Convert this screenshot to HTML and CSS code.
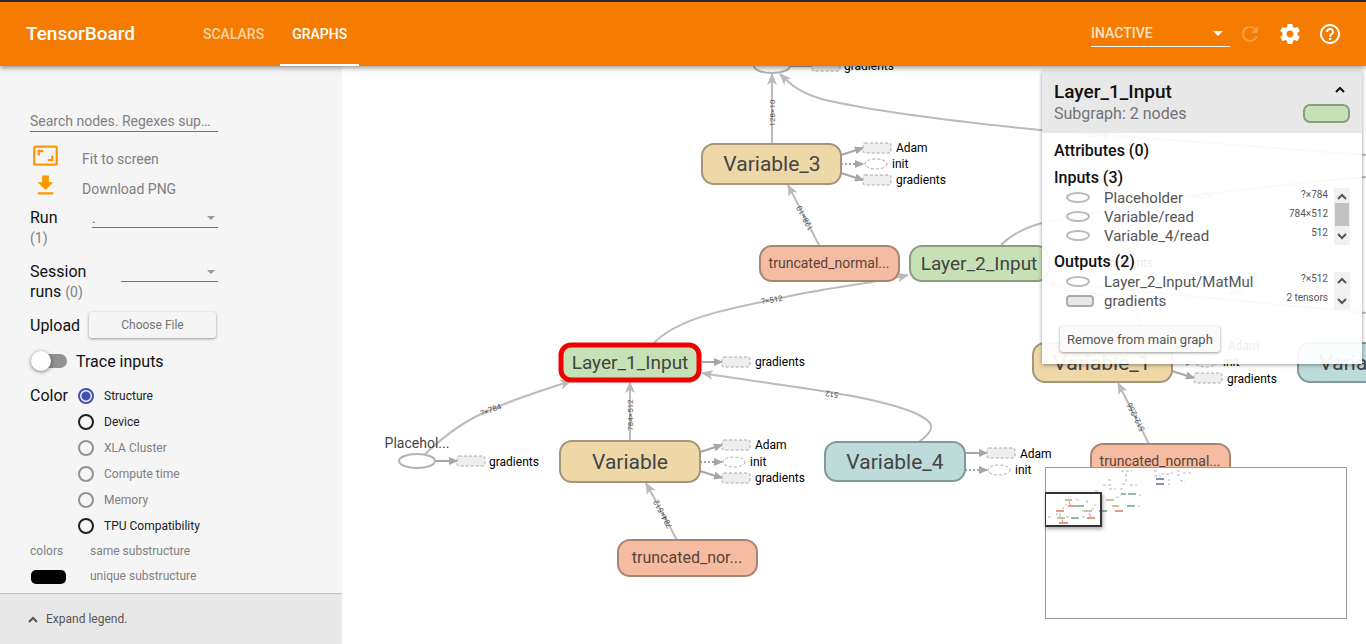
FILE: index.html
```html
<!DOCTYPE html>
<html lang="en">
<head>
<meta charset="utf-8">
<title>TensorBoard</title>
<link rel="stylesheet" href="styles.css">
</head>
<body>
<header class="toolbar">
  <h1 class="brand">TensorBoard</h1>
  <nav class="tabs">
    <a class="tab" href="#scalars">SCALARS</a>
    <a class="tab tab-active" href="#graphs">GRAPHS</a>
  </nav>
  <div class="tools">
    <div class="drop drop-light">
      <select aria-label="Inactive dashboards"><option>INACTIVE</option></select>
      <svg class="caret" viewBox="0 0 10 5"><path d="M0 0h10L5 5z"/></svg>
    </div>
    <button class="icon-btn" aria-label="Reload" disabled><svg viewBox="0 0 24 24"><path d="M17.65 6.35C16.2 4.9 14.21 4 12 4c-4.42 0-7.99 3.58-7.99 8s3.57 8 7.99 8c3.73 0 6.84-2.55 7.73-6h-2.08c-.82 2.33-3.04 4-5.65 4-3.31 0-6-2.69-6-6s2.69-6 6-6c1.66 0 3.14.69 4.22 1.78L13 11h7V4l-2.35 2.35z"/></svg></button>
    <button class="icon-btn" aria-label="Settings"><svg viewBox="0 0 24 24"><path d="M19.43 12.98c.04-.32.07-.64.07-.98s-.03-.66-.07-.98l2.11-1.65c.19-.15.24-.42.12-.64l-2-3.46c-.12-.22-.39-.3-.61-.22l-2.49 1c-.52-.4-1.08-.73-1.69-.98l-.38-2.65C14.46 2.18 14.25 2 14 2h-4c-.25 0-.46.18-.49.42l-.38 2.65c-.61.25-1.17.59-1.69.98l-2.49-1c-.23-.09-.49 0-.61.22l-2 3.46c-.13.22-.07.49.12.64l2.11 1.65c-.04.32-.07.65-.07.98s.03.66.07.98l-2.11 1.65c-.19.15-.24.42-.12.64l2 3.46c.12.22.39.3.61.22l2.49-1c.52.4 1.08.73 1.69.98l.38 2.65c.03.24.24.42.49.42h4c.25 0 .46-.18.49-.42l.38-2.65c.61-.25 1.17-.59 1.69-.98l2.49 1c.23.09.49 0 .61-.22l2-3.46c.12-.22.07-.49-.12-.64l-2.11-1.65zM12 15.5c-1.93 0-3.5-1.57-3.5-3.5s1.57-3.5 3.5-3.5 3.5 1.57 3.5 3.5-1.57 3.5-3.5 3.5z"/></svg></button>
    <button class="icon-btn" aria-label="Help"><svg viewBox="0 0 24 24"><path d="M11 18h2v-2h-2v2zm1-16C6.48 2 2 6.48 2 12s4.480 10 10 10 10-4.480 10-10S17.520 2 12 2zm0 18c-4.410 0-8-3.590-8-8s3.590-8 8-8 8 3.590 8 8-3.590 8-8 8zm0-14c-2.210 0-4 1.790-4 4h2c0-1.100.900-2 2-2s2 .900 2 2c0 2-3 1.750-3 5h2c0-2.250 3-2.500 3-5 0-2.210-1.790-4-4-4z"/></svg></button>
  </div>
</header>

<div class="workspace">
  <aside class="side">
    <div class="controls">
      <input class="search" type="text" aria-label="Search nodes" placeholder="Search nodes. Regexes supported.">
      <div class="actions">
        <button class="action"><svg viewBox="0 0 24 24"><path d="M19 12h-2v3h-3v2h5v-5zM7 9h3V7H5v5h2V9zm14-6H3c-1.100 0-2 .900-2 2v14c0 1.100.900 2 2 2h18c1.100 0 2-.900 2-2V5c0-1.100-.900-2-2-2zm0 16H3V5h18v14z"/></svg><span>Fit to screen</span></button>
        <button class="action"><svg viewBox="0 0 24 24"><path d="M19 9h-4V3H9v6H5l7 7 7-7zM5 18v2h14v-2H5z"/></svg><span>Download PNG</span></button>
      </div>
      <div class="field">
        <label class="label-short" for="run">Run <small>(1)</small></label>
        <div class="drop drop-wide"><select id="run"><option>.</option></select><svg class="caret" viewBox="0 0 10 5"><path d="M0 0h10L5 5z"/></svg></div>
      </div>
      <div class="field field-session">
        <label for="session">Session runs <small>(0)</small></label>
        <div class="drop drop-narrow"><select id="session"><option></option></select><svg class="caret" viewBox="0 0 10 5"><path d="M0 0h10L5 5z"/></svg></div>
      </div>
      <div class="upload"><span>Upload</span><button class="raised file">Choose File</button></div>
      <label class="trace"><input class="toggle" type="checkbox">Trace inputs</label>
      <fieldset class="color">
        <legend>Color</legend>
        <div class="radios">
          <label><input type="radio" name="color" checked>Structure</label>
          <label><input type="radio" name="color">Device</label>
          <label><input type="radio" name="color" disabled>XLA Cluster</label>
          <label><input type="radio" name="color" disabled>Compute time</label>
          <label><input type="radio" name="color" disabled>Memory</label>
          <label><input type="radio" name="color">TPU Compatibility</label>
        </div>
      </fieldset>
      <dl class="keys">
        <dt>colors</dt><dd>same substructure</dd>
        <dt><span class="swatch"></span></dt><dd>unique substructure</dd>
      </dl>
    </div>
    <button class="legend"><svg viewBox="0 0 10 7"><path d="M1 6l4-4 4 4"/></svg>Expand legend.</button>
  </aside>

  <main class="stage">
    <svg class="graph" role="img" aria-label="Main graph">
      <defs>
        <marker id="head" markerUnits="userSpaceOnUse" markerWidth="12" markerHeight="12" refX="11" refY="6" orient="auto"><path d="M0 1L12 6L0 11L3 6z" fill="#bbb"/></marker>
        <marker id="tip" markerUnits="userSpaceOnUse" markerWidth="9" markerHeight="8" refX="8" refY="4" orient="auto"><path d="M0 0L9 4L0 8z" fill="#a6a6a6"/></marker>
      </defs>
      <g transform="translate(-342 -66)">
        <g class="edges">
          <path d="M772 144V74"/>
          <path d="M1366 155C1280 149 1160 139 1040 130C960 122 880 112 830 101C802 95 791 85 780 74"/>
          <path d="M819 245L788 185"/>
          <path class="plain" d="M1001 245C1012 234 1024 228 1042 223C1150 200 1250 187 1366 177"/>
          <path d="M653 344C680 315 740 307 790 296C835 286 870 284 908 275"/>
          <path d="M1366 313L1046 282"/>
          <path d="M1142 342C1144 290 1100 300 1047 283"/>
          <path d="M425 454C445 436 455 428 475 417C505 402 540 391 571 381"/>
          <path d="M630 440V382"/>
          <path d="M919 442C936 429 936 423 915 413C865 393 780 386 702 373"/>
          <path d="M677 540L646 483"/>
          <path d="M1149 444L1118 383"/>
        </g>
        <g class="shapes">
          <text transform="translate(772 113) rotate(-90)">128×10</text>
          <text transform="translate(805 218) rotate(-118)">128×10</text>
          <text transform="translate(772 300) rotate(-9)">?×512</text>
          <text transform="translate(491 410) rotate(-20)">?×784</text>
          <text transform="translate(630 415) rotate(-90)">784×512</text>
          <text transform="translate(832 394) rotate(189)">512</text>
          <text transform="translate(663 514) rotate(-118)">784×512</text>
          <text transform="translate(1136 417) rotate(-117)">512×256</text>
          <text transform="translate(1095 135) rotate(5)">128×10</text>
          <text transform="translate(1203 196) rotate(-8)">?×256</text>
          <text transform="translate(1235 292) rotate(6)">256</text>
        </g>
        <g class="links">
          <path d="M790 66H812M841 155L863 148"/><path d="M841 173L863 180"/>
          <path d="M702 362H722"/><path d="M435 461H457"/>
          <path d="M700 452L722 445"/><path d="M700 471L722 478"/>
          <path d="M965 453H987"/><path d="M1172 371L1194 378"/><path d="M1172 352L1194 345"/>
          <path class="dash" d="M841 164H863"/><path class="dash" d="M700 462H722"/>
          <path class="dash" d="M965 470H987"/><path class="dash" d="M1172 362H1194"/>
        </g>
        <g class="stubs">
          <rect x="812" y="61" width="28" height="10" rx="2"/><rect x="863" y="143" width="28" height="10" rx="2"/><rect x="863" y="175" width="28" height="10" rx="2"/>
          <rect x="722" y="357" width="28" height="10" rx="2"/><rect x="457" y="456" width="28" height="10" rx="2"/>
          <rect x="722" y="440" width="28" height="10" rx="2"/><rect x="722" y="473" width="28" height="10" rx="2"/>
          <rect x="987" y="448" width="28" height="10" rx="2"/><rect x="1194" y="373" width="28" height="10" rx="2"/><rect x="1194" y="340" width="28" height="10" rx="2"/>
          <ellipse cx="876" cy="164" rx="11" ry="5"/><ellipse cx="734" cy="462" rx="11" ry="5"/><ellipse cx="999" cy="470" rx="11" ry="5"/><ellipse cx="1206" cy="362" rx="11" ry="5"/>
        </g>
        <g class="notes">
          <text x="844" y="70">gradients</text>
          <text x="896" y="152">Adam</text><text x="892" y="168">init</text><text x="896" y="184">gradients</text>
          <text x="755" y="366">gradients</text><text x="489" y="466">gradients</text>
          <text x="755" y="449">Adam</text><text x="750" y="466">init</text><text x="755" y="482">gradients</text>
          <text x="1020" y="458">Adam</text><text x="1015" y="474">init</text>
          <text x="1228" y="350">Adam</text><text x="1223" y="366">init</text><text x="1227" y="383">gradients</text>
          <text x="1103" y="267">gradients</text>
        </g>
        <g class="ops"><ellipse cx="772" cy="66" rx="18" ry="7"/><ellipse cx="417" cy="461" rx="18" ry="7"/><text x="417" y="448">Placehol...</text></g>
        <g class="nodes sand">
          <rect x="702" y="144" width="139" height="40" rx="12"/><text x="772" y="171">Variable_3</text>
          <rect x="560" y="441" width="140" height="41" rx="12"/><text x="630" y="469">Variable</text>
          <rect x="1033" y="343" width="139" height="39" rx="12"/><text x="1102" y="370">Variable_1</text>
        </g>
        <g class="nodes teal">
          <rect x="825" y="442" width="140" height="39" rx="12"/><text x="895" y="469">Variable_4</text>
          <rect x="1298" y="343" width="140" height="39" rx="12"/><text x="1368" y="370">Variable_5</text>
        </g>
        <g class="nodes green">
          <rect x="910" y="246" width="139" height="35" rx="12"/><text x="979" y="270">Layer_2_Input</text>
          <rect class="selected" x="561" y="345" width="138" height="35" rx="10"/><text x="630" y="369">Layer_1_Input</text>
        </g>
        <g class="nodes coral">
          <rect x="760" y="246" width="139" height="35" rx="12"/><text x="829" y="268">truncated_normal...</text>
          <rect x="618" y="540" width="139" height="36" rx="12"/><text class="roomy" x="687" y="563">truncated_nor...</text>
          <rect x="1091" y="444" width="139" height="36" rx="12"/><text x="1160" y="466">truncated_normal...</text>
        </g>
      </g>
    </svg>

    <section class="info">
      <header class="info-head">
        <div><h2>Layer_1_Input</h2><p>Subgraph: 2 nodes</p></div>
        <div class="info-side">
          <button class="fold" aria-label="Collapse"><svg viewBox="0 0 10 7"><path d="M1 6l4-4 4 4"/></svg></button>
          <span class="node-chip"></span>
        </div>
      </header>
      <div class="info-body">
        <h3>Attributes (0)</h3>
        <h3>Inputs (3)</h3>
        <div class="list">
          <ul>
            <li><i class="op"></i><span>Placeholder</span><b>?×784</b></li>
            <li><i class="op"></i><span>Variable/read</span><b>784×512</b></li>
            <li><i class="op"></i><span>Variable_4/read</span><b>512</b></li>
          </ul>
          <div class="bar"><svg viewBox="0 0 10 7"><path d="M1 6l4-4 4 4"/></svg><span class="thumb"></span><svg viewBox="0 0 10 7"><path d="M1 1l4 4 4-4"/></svg></div>
        </div>
        <h3>Outputs (2)</h3>
        <div class="list">
          <ul>
            <li><i class="op"></i><span>Layer_2_Input/MatMul</span><b>?×512</b></li>
            <li><i class="op group"></i><span>gradients</span><b>2 tensors</b></li>
          </ul>
          <div class="bar"><svg viewBox="0 0 10 7"><path d="M1 6l4-4 4 4"/></svg><svg viewBox="0 0 10 7"><path d="M1 1l4 4 4-4"/></svg></div>
        </div>
        <button class="raised remove">Remove from main graph</button>
      </div>
    </section>

    <div class="minimap">
      <svg viewBox="0 0 300 150" role="img" aria-label="Minimap">
        <g fill="none" stroke-width="1" opacity=".6">
          <path stroke="#888" stroke-dasharray="3 2" d="M75 3h11M80 6v9M62 12h5M57 17h8M84 17h7M76 16h5M63 21h7M74 21h5M49 23h3M70 30l5-3M30 31l4 2M41 32v5M48 37h2M93 27h2M92 38h2M108 3h4M108 8h7M115 6h8M125 5h2M131 3h5M131 7h4M137 5h8M134 12l5 2M122 12h2M122 16h2M10 47l4-4M16 41l5-5M2 49h5M20 49h3M36 49h3M36 43h3M45 41h3"/>
          <path stroke="#35457a" stroke-width="2" d="M110 11h8M110 16h8"/>
          <path stroke="#a89a5c" stroke-width="2" d="M19 32h7M38 43h8M66 38h7M11 50h8M60 32h8"/>
          <path stroke="#d8573a" stroke-width="2" d="M22 38h8M10 43h8M41 50h8M13 55h9M69 43h8"/>
          <path stroke="#4d8c78" stroke-width="2" d="M30 38h8M25 50h8M53 43h8M81 38h8M82 26h8M75 26h5"/>
          <path stroke="#d8573a" d="M23 33l1 4M14 45v4M16 51l1 4M43 45l2 4"/>
        </g>
      </svg>
      <div class="lens"></div>
    </div>
  </main>
</div>
</body>
</html>
```

FILE: styles.css
```css
* { box-sizing: border-box; }
body {
  margin: 0;
  height: 100vh;
  display: flex;
  flex-direction: column;
  overflow: hidden;
  font-family: Roboto, "Liberation Sans", sans-serif;
  color: #111;
  background: #fff;
}
h1, h2, h3, p, ul, dl, dd, fieldset { margin: 0; padding: 0; border: 0; }
ul { list-style: none; }
button, input, select { font: inherit; color: inherit; margin: 0; }
button { border: 0; background: none; padding: 0; cursor: pointer; }
svg { display: block; }

.toolbar {
  display: flex;
  align-items: stretch;
  height: 66px;
  flex: none;
  padding: 0 16px 0 26px;
  border-top: 2px solid #2c2730;
  background: #f57c00;
  color: #fff;
  box-shadow: 0 2px 5px rgba(0, 0, 0, .4);
  position: relative;
  z-index: 2;
}
.brand { font-size: 19px; font-weight: 500; line-height: 64px; width: 165px; }
.tabs { display: flex; gap: 4px; }
.tab {
  padding: 0 12px;
  font-size: 14px;
  font-weight: 500;
  line-height: 64px;
  color: #ffd5a8;
  text-decoration: none;
}
.tab-active { color: #fff; box-shadow: inset 0 -2px #fff; }
.tools { display: flex; align-items: center; margin-left: auto; }

.drop { position: relative; height: 20px; border-bottom: 1px solid #737373; }
.drop select {
  appearance: none;
  width: 100%;
  height: 18px;
  border: 0;
  padding: 0;
  background: none;
  font-size: 14px;
  color: #666;
}
.caret { position: absolute; right: 3px; top: 8px; width: 8px; fill: #999; }
.drop-light { width: 139px; height: 26px; border-color: #fff; }
.drop-light select { font-weight: 500; color: #ffe3c4; height: 24px; }
.drop-light .caret { right: 7px; top: 10px; width: 10px; fill: #fff; }
.drop-wide { width: 126px; }
.drop-narrow { width: 97px; }

.icon-btn { width: 40px; height: 40px; display: grid; place-items: center; color: #fff; }
.icon-btn svg { width: 24px; fill: currentColor; }
.icon-btn:disabled { opacity: .25; }

.workspace { flex: 1; display: flex; min-height: 0; }
.side { flex: 0 0 25%; min-width: 240px; display: flex; flex-direction: column; background: #f5f5f5; }
.controls { flex: 1; width: 218px; padding: 44px 0 0 30px; }
.search {
  display: block;
  width: 100%;
  height: 22px;
  border: 0;
  border-bottom: 1px solid #737373;
  padding: 0 6px 0 0;
  background: none;
  font-size: 14px;
  text-overflow: ellipsis;
}
.search::placeholder { color: #808080; opacity: 1; }
.actions { display: flex; flex-direction: column; margin: 10px 0 6px; }
.action { display: flex; align-items: flex-start; gap: 23px; height: 30px; padding-left: 2px; font-size: 14px; color: #808080; }
.action svg { width: 27px; height: 27px; fill: #ff9800; }
.action span { padding-top: 8px; line-height: 18px; }
.field { display: flex; justify-content: space-between; height: 40px; font-size: 16px; line-height: 20px; }
.field label { width: 60px; }
.field .label-short { width: 30px; }
.field small { font-size: 14px; line-height: 1; color: #808080; }
.field .drop { flex: none; }
.field-session { margin-top: 14px; }
.upload { display: flex; align-items: center; justify-content: space-between; margin-top: 10px; padding-right: 2px; }
.raised { border-radius: 3px; box-shadow: 0 1px 3px rgba(0, 0, 0, .4); color: #757575; }
.file { width: 127px; height: 26px; font-size: 12px; }
.trace { display: flex; align-items: center; gap: 9px; height: 20px; margin-top: 13px; }
.toggle { appearance: none; position: relative; width: 37px; height: 20px; }
.toggle::before { content: ""; position: absolute; inset: 3px 0 3px 2px; border-radius: 7px; background: #929292; }
.toggle::after { content: ""; position: absolute; left: 1px; top: 0; width: 20px; height: 20px; border-radius: 50%; background: #fff; box-shadow: 0 1px 4px rgba(0, 0, 0, .5); }
.color { display: flex; margin-top: 12px; }
.color legend { float: left; width: 48px; padding: 0; line-height: 26px; }
.radios { display: flex; flex-direction: column; }
.radios label { display: flex; align-items: center; gap: 10px; height: 26px; font-size: 12px; color: #212121; }
.radios label:has(:disabled) { color: #808080; }
.radios input { appearance: none; width: 16px; height: 16px; border: 2px solid #212121; border-radius: 50%; }
.radios input:disabled { border-color: #929292; }
.radios input:checked { border-color: #3f51b5; background: radial-gradient(circle, #3f51b5 4px, transparent 5px); }
.keys { display: grid; grid-template-columns: 60px 1fr; line-height: 25px; font-size: 12px; color: #808080; white-space: nowrap; }
.keys dt { display: flex; align-items: center; }
.swatch { width: 35px; height: 14px; margin-left: 1px; border-radius: 5px; background: #000; }
.legend {
  display: flex;
  align-items: center;
  gap: 8px;
  height: 51px;
  padding: 0 28px;
  border-top: 1px solid #c0c0c0;
  background: #e8e8e8;
  font-size: 12px;
  color: #555;
}
.legend svg, .fold svg, .bar svg { width: 10px; fill: none; stroke: #555; stroke-width: 2; }

.stage { position: relative; flex: 1; min-width: 0; overflow: hidden; }
.graph { width: 100%; height: 100%; }
.edges path { fill: none; stroke: #bbb; stroke-width: 2; marker-end: url(#head); }
.edges .plain { marker-end: none; }
.shapes text { font-size: 8px; fill: #555; text-anchor: middle; dominant-baseline: central; }
.links path { fill: none; stroke: #a6a6a6; stroke-width: 2; marker-end: url(#tip); }
.links .dash { stroke-dasharray: 2 2; }
.stubs rect { fill: #eee; }
.stubs ellipse { fill: #fff; }
.stubs rect, .stubs ellipse { stroke: #aaa; stroke-dasharray: 3 2; }
.notes text { font-size: 12px; fill: #000; }
.ops ellipse { fill: #fff; stroke: #b3b3b3; stroke-width: 2; }
.ops text { font-size: 14px; fill: #444; text-anchor: middle; }
.nodes rect { stroke-width: 2; }
.nodes text { font-size: 21px; fill: #444; text-anchor: middle; }
.sand rect { fill: #eed8a8; stroke: #a4967a; }
.teal rect { fill: #bcdbd9; stroke: #829997; }
.green rect { fill: #c5e1b5; stroke: #8b9d80; }
.green text { font-size: 19px; }
.green .selected { stroke: #f00000; stroke-width: 5; }
.coral rect { fill: #f5bca1; stroke: #a98472; }
.coral text { font-size: 14px; fill: #5a4238; }
.coral .roomy { font-size: 16px; }

.info {
  position: absolute;
  top: 5px;
  right: 4px;
  width: 320px;
  background: rgba(255, 255, 255, .93);
  box-shadow: 0 1px 4px rgba(0, 0, 0, .4);
}
.info-head { display: flex; justify-content: space-between; padding: 10px 12px 8px; background: #e8e8e8; }
.info h2 { font-size: 19px; font-weight: 500; line-height: 22px; }
.info p { font-size: 16px; line-height: 22px; color: #737373; }
.info-side { display: flex; flex-direction: column; align-items: flex-end; gap: 7px; }
.fold { width: 20px; height: 16px; display: grid; place-items: center; }
.fold svg { stroke: #111; }
.node-chip { width: 47px; height: 19px; border: 2px solid #8b9d80; border-radius: 7px; background: #c5e1b5; }
.info-body { padding: 1px 12px 12px; }
.info h3 { margin-top: 7px; font-size: 16px; font-weight: 500; line-height: 20px; }
.list { display: flex; gap: 6px; }
.list ul { flex: 1; padding-left: 12px; }
.list li { display: flex; align-items: center; height: 19px; font-size: 15px; color: #555; }
.list li span { flex: 1; }
.list b { font-size: 10px; font-weight: 400; padding-bottom: 6px; }
.op { width: 24px; height: 11px; margin-right: 14px; border: 2px solid #bbb; border-radius: 50%; background: #fff; }
.group { width: 28px; height: 12px; margin-right: 10px; border-radius: 4px; border-color: #aaa; background: #e8e8e8; }
.bar { display: flex; flex-direction: column; align-items: center; justify-content: space-between; width: 16px; padding: 5px 0; background: #f1f1f1; }
.thumb { width: 14px; height: 23px; margin-bottom: 4px; background: #c1c1c1; }
.remove { margin: 16px 0 0 6px; padding: 0 7px; height: 26px; font-size: 13px; color: #555; background: #fafafa; }

.minimap { position: absolute; right: 19px; bottom: 25px; width: 302px; height: 152px; border: 1px solid #999; background: #fff; }
.lens { position: absolute; left: -1px; top: 24px; width: 57px; height: 35px; border: 2px solid #333; border-left-width: 1px; box-shadow: 1px 2px 4px rgba(0, 0, 0, .35); }
```
